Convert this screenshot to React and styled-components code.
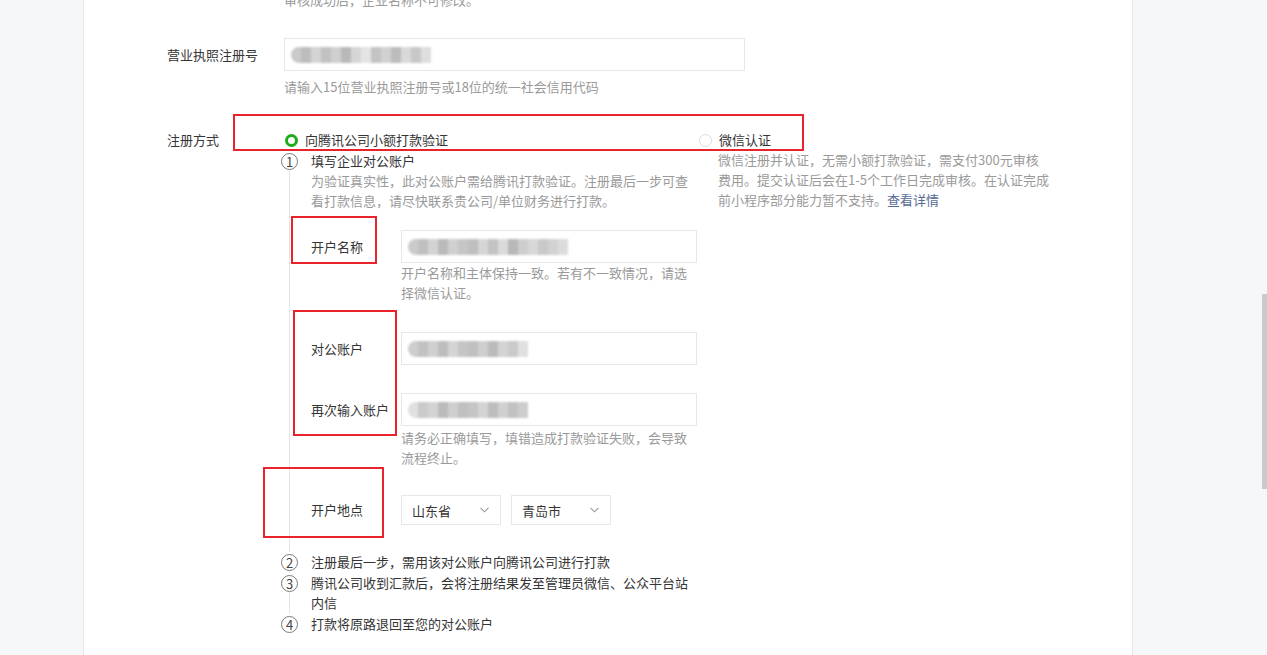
import React from 'react';
import styled, { createGlobalStyle } from 'styled-components';

const GlobalStyle = createGlobalStyle`
    html, body {
        margin: 0;
        padding: 0;
        overflow: hidden;
    }
    body {
        font-family: "Noto Sans CJK SC", "Liberation Sans", sans-serif;
        font-size: 13px;
        color: #353535;
        background: #f6f7f9;
    }
`;

const Page = styled.div`
    position: relative;
    height: 655px;
    overflow: hidden;
    background: #f6f7f9;
`;

const Card = styled.div`
    box-sizing: border-box;
    width: 1050px;
    min-height: 720px;
    margin: -10px 0 0 83px;
    padding-left: 83px;
    background: #fff;
    border-left: 1px solid #e6e8eb;
    border-right: 1px solid #e6e8eb;
`;

const Field = styled.div`
    display: flex;
    margin-top: ${p => p.$gap || 0}px;
`;

const FieldLabel = styled.div`
    width: 117px;
    flex-shrink: 0;
    line-height: ${p => p.$lh || 20}px;
    color: #353535;
`;

const FieldBody = styled.div`
    flex: 1;
    min-width: 0;
`;

const Hint = styled.div`
    line-height: 20px;
    color: #9a9a9a;
    margin-top: ${p => p.$gap || 0}px;
`;

const TextBox = styled.div`
    box-sizing: border-box;
    width: ${p => p.$w}px;
    height: ${p => p.$h || 33}px;
    padding: 0 6px;
    display: flex;
    align-items: center;
    background: #fff;
    border: 1px solid #e7e7eb;
`;

const MosaicRow = styled.div`
    display: flex;
    height: 16px;
    border-radius: 8px 0 0 8px;
    overflow: hidden;
    filter: blur(1.2px);
`;

const Cell = styled.span`
    width: 10px;
    height: 100%;
    background: ${p => p.$c};
`;

const Mosaic = ({ shades }) => (
    <MosaicRow>
        {shades.map((c, i) => (
            <Cell key={i} $c={c} />
        ))}
    </MosaicRow>
);

const Choices = styled.div`
    display: grid;
    grid-template-columns: 414px 1fr;
`;

const RadioLine = styled.div`
    display: flex;
    align-items: center;
    gap: 7px;
    padding-left: 1px;
    line-height: 20px;
    color: #353535;
`;

const RadioDot = styled.span`
    box-sizing: border-box;
    width: 13px;
    height: 13px;
    border-radius: 50%;
    border: ${p => (p.$on ? '3.5px solid #1aad19' : '1px solid #dcdcdc')};
`;

const SideDesc = styled.div`
    padding-left: 20px;
    line-height: 20px;
    color: #9a9a9a;
`;

const Link = styled.a`
    color: #576b95;
    text-decoration: none;
`;

const Steps = styled.div`
    margin: 1px 0 0 -3px;
`;

const StepRow = styled.div`
    display: flex;
    gap: 13px;
`;

const Rail = styled.div`
    width: 17px;
    flex-shrink: 0;
    display: flex;
    flex-direction: column;
    align-items: center;
`;

const StepNum = styled.span`
    box-sizing: border-box;
    width: 17px;
    height: 17px;
    margin-top: 1.5px;
    border: 1px solid #7a7a7a;
    border-radius: 50%;
    display: flex;
    align-items: center;
    justify-content: center;
    font-size: 13px;
    line-height: 1;
    color: #444;
`;

const RailLine = styled.span`
    flex: 1;
    width: 1px;
    background: #e4e4e4;
`;

const StepBody = styled.div`
    flex: 1;
    padding-bottom: ${p => p.$pb || 0}px;
`;

const StepTitle = styled.div`
    line-height: 20px;
    color: #353535;
`;

const SubForm = styled.div`
    margin-top: 19px;
`;

const SubRow = styled.div`
    display: flex;
    margin-top: ${p => p.$gap || 0}px;
`;

const SubLabel = styled.div`
    width: 90px;
    flex-shrink: 0;
    line-height: ${p => p.$lh || 33}px;
    color: #353535;
`;

const Selects = styled.div`
    display: flex;
    gap: 10px;
`;

const SelectBox = styled.div`
    box-sizing: border-box;
    width: 100px;
    height: 30px;
    padding: 0 11px 0 10px;
    display: flex;
    align-items: center;
    justify-content: space-between;
    border: 1px solid #e7e7eb;
    background: #fff;
    color: #353535;
`;

const Mark = styled.div`
    position: absolute;
    box-sizing: border-box;
    border: 2px solid #e8232b;
    left: ${p => p.$x}px;
    top: ${p => p.$y}px;
    width: ${p => p.$w}px;
    height: ${p => p.$h}px;
    pointer-events: none;
`;

const ScrollThumb = styled.div`
    position: absolute;
    right: 0;
    top: 294px;
    width: 5px;
    height: 195px;
    background: #cacaca;
`;

const Chevron = () => (
    <svg width="9" height="6" viewBox="0 0 9 6">
        <polyline points="0.5,0.8 4.5,4.8 8.5,0.8" fill="none" stroke="#9a9a9a" strokeWidth="1.1" />
    </svg>
);

const Select = ({ value }) => (
    <SelectBox>
        <span>{value}</span>
        <Chevron />
    </SelectBox>
);

const Step = ({ n, last, pb, children }) => (
    <StepRow>
        <Rail>
            <StepNum>{n}</StepNum>
            {!last && <RailLine />}
        </Rail>
        <StepBody $pb={pb}>{children}</StepBody>
    </StepRow>
);

const licenseShades = ['#c9c9c9', '#bdbdbd', '#d4d4d4', '#c2c2c2', '#cfcfcf', '#b9b9b9', '#d6d6d6', '#e4e4e4', '#c4c4c4', '#d1d1d1', '#bcbcbc', '#d9d9d9', '#c8c8c8', '#dedede'];
const nameShades = ['#cbcbcb', '#c0c0c0', '#d3d3d3', '#bababa', '#d0d0d0', '#c6c6c6', '#bfbfbf', '#d5d5d5', '#c3c3c3', '#dadada', '#b8b8b8', '#cdcdcd', '#d8d8d8', '#c9c9c9', '#d2d2d2', '#dcdcdc'];
const acctShades = ['#cdcdcd', '#c2c2c2', '#d0d0d0', '#bdbdbd', '#d4d4d4', '#c5c5c5', '#c0c0c0', '#cecece', '#bbbbbb', '#d3d3d3', '#cacaca', '#e0e0e0'];

const App = () => {
    return (
        <Page>
            <GlobalStyle />
            <Card>
                <Field>
                    <FieldLabel />
                    <FieldBody>
                        <Hint>审核成功后，企业名称不可修改。</Hint>
                    </FieldBody>
                </Field>

                <Field $gap={28}>
                    <FieldLabel $lh={33}>营业执照注册号</FieldLabel>
                    <FieldBody>
                        <TextBox $w={461}>
                            <Mosaic shades={licenseShades} />
                        </TextBox>
                        <Hint $gap={6}>请输入15位营业执照注册号或18位的统一社会信用代码</Hint>
                    </FieldBody>
                </Field>

                <Field $gap={33}>
                    <FieldLabel>注册方式</FieldLabel>
                    <FieldBody>
                        <Choices>
                            <div>
                                <RadioLine>
                                    <RadioDot $on />
                                    向腾讯公司小额打款验证
                                </RadioLine>
                                <Steps>
                                    <Step n="1" pb={27}>
                                        <StepTitle>填写企业对公账户</StepTitle>
                                        <Hint>
                                            为验证真实性，此对公账户需给腾讯打款验证。注册最后一步可查
                                            <br />
                                            看打款信息，请尽快联系贵公司/单位财务进行打款。
                                        </Hint>
                                        <SubForm>
                                            <SubRow>
                                                <SubLabel>开户名称</SubLabel>
                                                <div>
                                                    <TextBox $w={296}>
                                                        <Mosaic shades={nameShades} />
                                                    </TextBox>
                                                    <Hint>
                                                        开户名称和主体保持一致。若有不一致情况，请选
                                                        <br />
                                                        择微信认证。
                                                    </Hint>
                                                </div>
                                            </SubRow>
                                            <SubRow $gap={29}>
                                                <SubLabel>对公账户</SubLabel>
                                                <TextBox $w={296}>
                                                    <Mosaic shades={acctShades} />
                                                </TextBox>
                                            </SubRow>
                                            <SubRow $gap={28}>
                                                <SubLabel>再次输入账户</SubLabel>
                                                <div>
                                                    <TextBox $w={296}>
                                                        <Mosaic shades={acctShades.slice().reverse()} />
                                                    </TextBox>
                                                    <Hint $gap={2}>
                                                        请务必正确填写，填错造成打款验证失败，会导致
                                                        <br />
                                                        流程终止。
                                                    </Hint>
                                                </div>
                                            </SubRow>
                                            <SubRow $gap={27}>
                                                <SubLabel $lh={30}>开户地点</SubLabel>
                                                <Selects>
                                                    <Select value="山东省" />
                                                    <Select value="青岛市" />
                                                </Selects>
                                            </SubRow>
                                        </SubForm>
                                    </Step>
                                    <Step n="2" pb={1}>
                                        <StepTitle>注册最后一步，需用该对公账户向腾讯公司进行打款</StepTitle>
                                    </Step>
                                    <Step n="3" pb={1}>
                                        <StepTitle>
                                            腾讯公司收到汇款后，会将注册结果发至管理员微信、公众平台站
                                            <br />
                                            内信
                                        </StepTitle>
                                    </Step>
                                    <Step n="4" last>
                                        <StepTitle>打款将原路退回至您的对公账户</StepTitle>
                                    </Step>
                                </Steps>
                            </div>
                            <div>
                                <RadioLine>
                                    <RadioDot />
                                    微信认证
                                </RadioLine>
                                <SideDesc>
                                    微信注册并认证，无需小额打款验证，需支付300元审核
                                    <br />
                                    费用。提交认证后会在1-5个工作日完成审核。在认证完成
                                    <br />
                                    前小程序部分能力暂不支持。<Link href="#">查看详情</Link>
                                </SideDesc>
                            </div>
                        </Choices>
                    </FieldBody>
                </Field>
            </Card>

            <Mark $x={233} $y={114} $w={571} $h={37} />
            <Mark $x={291} $y={216} $w={86} $h={48} />
            <Mark $x={293} $y={310} $w={104} $h={126} />
            <Mark $x={263} $y={467} $w={121} $h={71} />
            <ScrollThumb />
        </Page>
    );
};

export default App;
